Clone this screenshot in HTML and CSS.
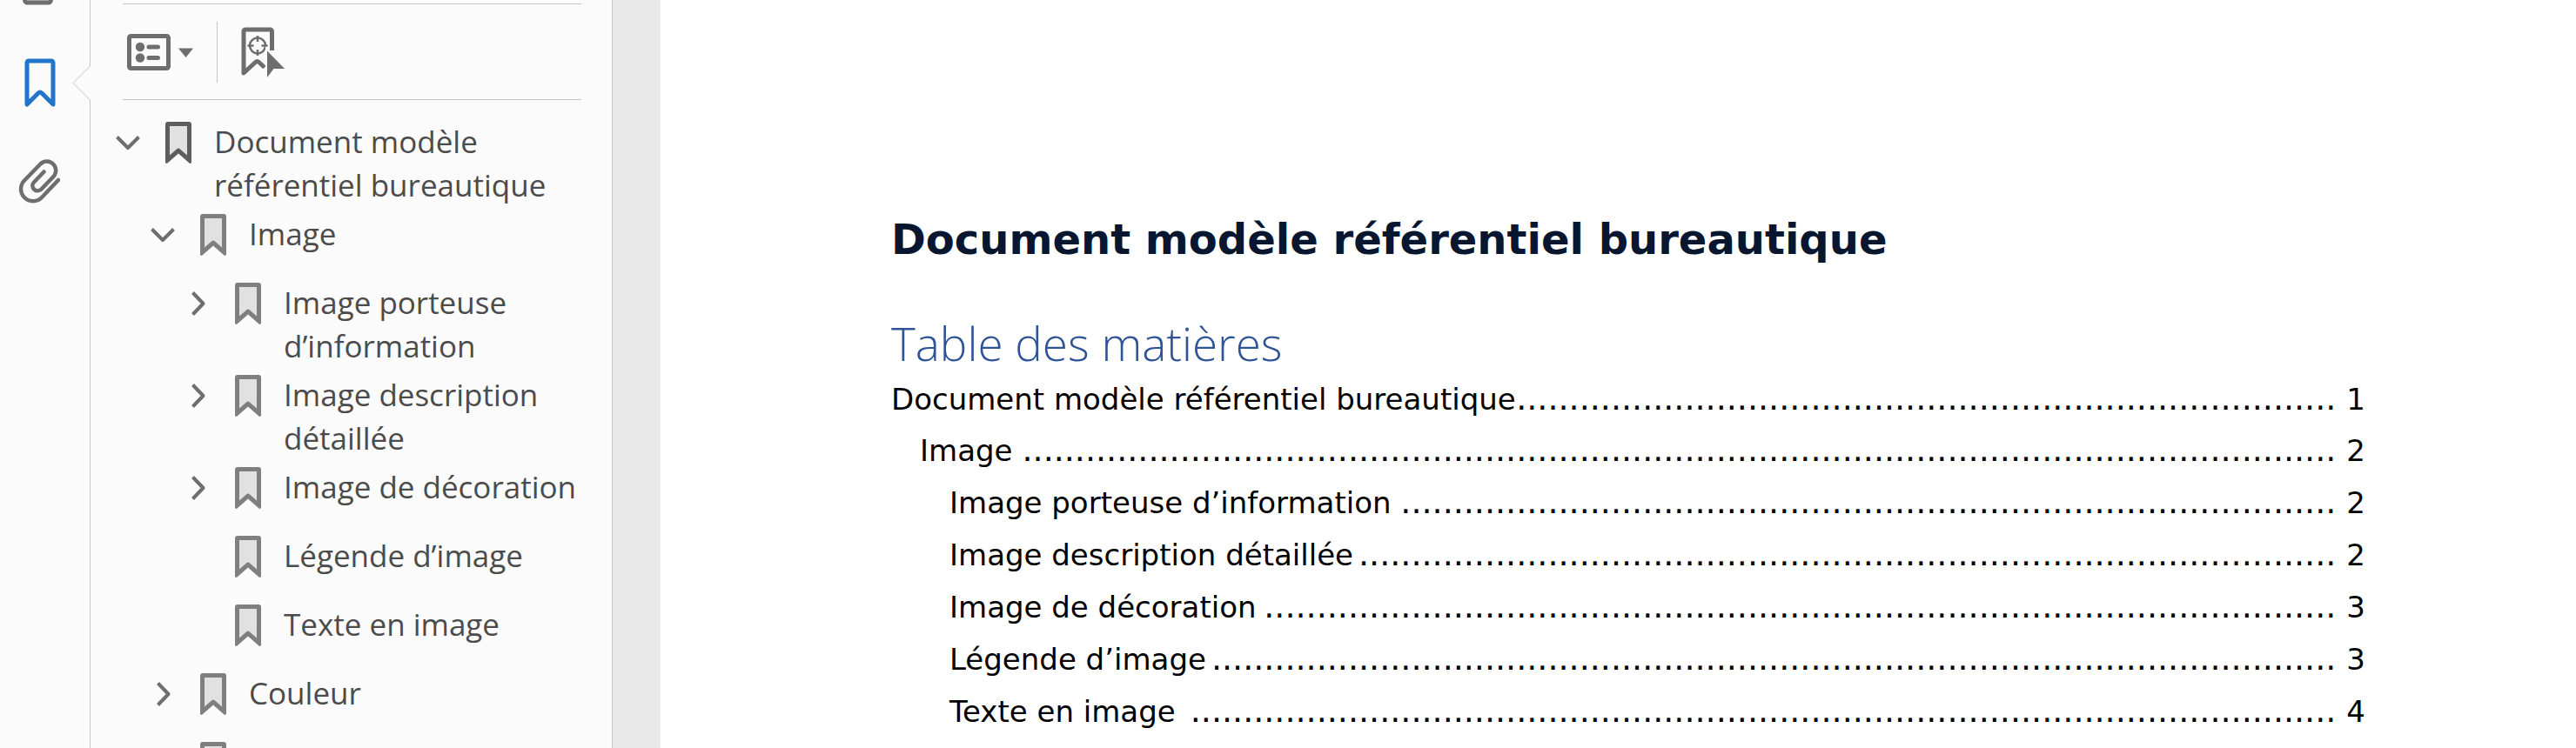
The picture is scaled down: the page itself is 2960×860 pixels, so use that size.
FILE: index.html
```html
<!DOCTYPE html>
<html lang="fr">
<head>
<meta charset="utf-8">
<title>Document modèle référentiel bureautique</title>
<link rel="stylesheet" href="styles.css">
</head>
<body>
<svg class="sprite" aria-hidden="true">
  <symbol id="mark" viewBox="0 0 30 48"><path d="M2 45.500V4a2 2 0 0 1 2-2H26a2 2 0 0 1 2 2V45.500L15 34Z" fill="#e1e1e1"/><path fill="currentColor" fill-rule="evenodd" d="M0 3a3 3 0 0 1 3-3H27a3 3 0 0 1 3 3V46.500a1.500 1.500 0 0 1-2.500 1L15 36.500 2.500 47.500A1.500 1.500 0 0 1 0 46.500ZM5 5V38.500L13 31.500a3 3 0 0 1 4 0L25 38.500V5Z"/></symbol>
  <symbol id="down" viewBox="0 0 28 28"><path d="M1.500 7.500 14 20 26.500 7.500" fill="none" stroke="currentColor" stroke-width="4" stroke-linejoin="round"/></symbol>
  <symbol id="right" viewBox="0 0 28 28"><path d="M8.500 1.500 20.500 14 8.500 26.500" fill="none" stroke="currentColor" stroke-width="4" stroke-linejoin="round"/></symbol>
</svg>
<div class="viewer">
  <nav class="rail" aria-label="Volets">
    <button class="rail-btn rail-pages"><svg width="36" height="48" viewBox="0 0 36 48"><rect x="2.500" y="2.500" width="30" height="42.500" rx="3" fill="#ddd" stroke="#6e6e6e" stroke-width="5"/></svg></button>
    <button class="rail-btn rail-active"><svg width="36" height="56" viewBox="0 0 36 56"><path d="M3 53V5a2 2 0 0 1 2-2H31a2 2 0 0 1 2 2V53L20 40a3 3 0 0 0-4 0Z" fill="none" stroke="#2174ca" stroke-width="5" stroke-linejoin="round"/></svg></button>
    <button class="rail-btn rail-clip"><svg width="48" height="52" viewBox="0 0 48 52"><path d="M29.500 15.500 18 27.500a5.800 5.800 0 0 0 8.500 8L39.500 22a10.500 10.500 0 0 0 1-15 10.500 10.500 0 0 0-15-.5L7 25.500a14 14 0 0 0 0 19.500 14 14 0 0 0 20 0L46 25" fill="none" stroke="#6e6e6e" stroke-width="4.500" stroke-linecap="round" stroke-linejoin="round"/></svg></button>
    <svg class="notch" width="21" height="39" viewBox="0 0 21 39"><path d="M20 0h1v39h-1z" fill="#fbfbfb"/><path d="M20.500 0 1 19.500 20.500 39" fill="#fbfbfb" stroke="#c6c6c6"/></svg>
  </nav>
  <aside class="panel">
    <div class="toolbar">
      <button class="tool"><svg width="76" height="42" viewBox="0 0 76 42"><rect x="2.500" y="2.500" width="45" height="37" rx="2" fill="none" stroke="#6e6e6e" stroke-width="5"/><circle cx="15" cy="15" r="5.200" fill="#6e6e6e"/><circle cx="15" cy="27.500" r="5.200" fill="#6e6e6e"/><path d="M25 15H35.500M25 27.500H35.500" stroke="#6e6e6e" stroke-width="5" stroke-linecap="round"/><path d="M59 16.500H76L67.500 27Z" fill="#6e6e6e"/></svg></button>
      <span class="divider"></span>
      <button class="tool"><svg width="50" height="58" viewBox="0 0 50 58"><path d="M35.500 27V5a2 2 0 0 0-2-2H5a2 2 0 0 0-2 2V53L16.500 40.500a3 3 0 0 1 4 0L27 46.500" fill="none" stroke="#6e6e6e" stroke-width="5" stroke-linejoin="round"/><circle cx="19" cy="21.500" r="9" fill="none" stroke="#6e6e6e" stroke-width="2.500"/><path d="M19 10V17M19 26V33M7.500 21.500H14.500M23.500 21.500H30.500" stroke="#6e6e6e" stroke-width="2.500"/><path d="M28 22V62L50 50Z" fill="#fbfbfb"/><path d="M30 27.500V58L37.500 48H50Z" fill="#6e6e6e"/></svg></button>
    </div>
    <ul class="tree">
      <li>
        <div class="row row-root"><button class="twist"><svg><use href="#down"/></svg></button><svg class="mark"><use href="#mark"/></svg><a href="#titre">Document modèle référentiel bureautique</a></div>
        <ul>
          <li>
            <div class="row"><button class="twist"><svg><use href="#down"/></svg></button><svg class="mark"><use href="#mark"/></svg><a href="#titre">Image</a></div>
            <ul>
              <li><div class="row"><button class="twist"><svg><use href="#right"/></svg></button><svg class="mark"><use href="#mark"/></svg><a href="#titre">Image porteuse d’information</a></div></li>
              <li><div class="row"><button class="twist"><svg><use href="#right"/></svg></button><svg class="mark"><use href="#mark"/></svg><a href="#titre">Image description détaillée</a></div></li>
              <li><div class="row"><button class="twist"><svg><use href="#right"/></svg></button><svg class="mark"><use href="#mark"/></svg><a href="#titre">Image de décoration</a></div></li>
              <li><div class="row"><span class="twist"></span><svg class="mark"><use href="#mark"/></svg><a href="#titre">Légende d’image</a></div></li>
              <li><div class="row"><span class="twist"></span><svg class="mark"><use href="#mark"/></svg><a href="#titre">Texte en image</a></div></li>
            </ul>
          </li>
          <li><div class="row"><button class="twist"><svg><use href="#right"/></svg></button><svg class="mark"><use href="#mark"/></svg><a href="#titre">Couleur</a></div></li>
          <li><div class="row"><span class="twist"></span><svg class="mark"><use href="#mark"/></svg></div></li>
        </ul>
      </li>
    </ul>
  </aside>
  <main class="page">
    <h1 id="titre">Document modèle référentiel bureautique</h1>
    <h2>Table des matières</h2>
    <ol class="toc">
      <li class="l1"><a href="#titre">Document modèle référentiel bureautique</a><span class="dots">..............................................................................</span><span>1</span></li>
      <li class="l2"><a href="#titre">Image</a><span class="dots">.............................................................................................................................</span><span>2</span></li>
      <li class="l3"><a href="#titre">Image porteuse d’information</a><span class="dots">.........................................................................................</span><span>2</span></li>
      <li class="l3"><a href="#titre">Image description détaillée</a><span class="dots">.............................................................................................</span><span>2</span></li>
      <li class="l3"><a href="#titre">Image de décoration</a><span class="dots">......................................................................................................</span><span>3</span></li>
      <li class="l3"><a href="#titre">Légende d’image</a><span class="dots">...........................................................................................................</span><span>3</span></li>
      <li class="l3"><a href="#titre">Texte en image</a><span class="dots">.............................................................................................................</span><span>4</span></li>
    </ol>
  </main>
</div>
</body>
</html>
```

FILE: styles.css
```css
* { box-sizing: border-box; }
body { margin: 0; background: #e9e9e9; }
ul, ol { list-style: none; margin: 0; padding: 0; }
a { color: inherit; text-decoration: none; }
button { padding: 0; border: 0; background: none; color: inherit; cursor: pointer; }
svg { display: block; }
.sprite { position: absolute; width: 0; height: 0; }

.viewer { display: flex; height: 100vh; overflow: hidden; }

.rail {
  position: relative;
  flex: none;
  width: 104px;
  padding-left: 21px;
  border-right: 1px solid #c6c6c6;
  background: #fbfbfb;
}
.rail-btn { display: block; }
.rail-pages { margin: -42px 0 0 5px; }
.rail-active { margin: 61px 0 0 7px; }
.rail-clip { margin-top: 59px; }
.notch { position: absolute; top: 76px; right: -1px; }

.panel {
  flex: none;
  width: 600px;
  padding: 4px 35px 0 28px;
  border-right: 1px solid #c6c6c6;
  background: #fbfbfb;
  color: #4b4b4b;
}
.toolbar {
  display: flex;
  align-items: center;
  gap: 27px;
  height: 111px;
  margin-left: 9px;
  padding-left: 5px;
  border: solid #c6c6c6;
  border-width: 1px 0;
}
.divider { width: 1px; height: 70px; background: #c6c6c6; }

.tree { padding-top: 20px; font: 35px/50px "Open Sans", "Noto Sans", sans-serif; }
.tree ul { padding-left: 40px; }
.row { display: flex; align-items: flex-start; min-height: 79px; padding: 3px 0; }
.row a { flex: 1; min-width: 0; }
.twist { flex: none; width: 30px; height: 52px; color: #6e6e6e; }
.twist svg { width: 28px; height: 28px; margin-left: 1px; }
.mark { flex: none; width: 30px; height: 48px; margin: 2px 26px 0 28px; color: #7f7f7f; }
.row-root .mark { color: #5e5e5e; }

.page {
  flex: 1;
  min-width: 0;
  margin-left: 55px;
  padding: 240px 242px 0 265px;
  background: #fff;
}
h1 { margin: 0; color: #08162f; font: bold 48px/70px "DejaVu Sans", sans-serif; }
h2 { margin: 50px 0 0; color: #2f5496; font: 300 53px/70px "Open Sans", sans-serif; }
.toc { color: #000; font: 34px/59px "DejaVu Sans", sans-serif; }
.toc li { display: flex; align-items: baseline; }
.toc a { white-space: nowrap; }
.l2 { padding-left: 33px; }
.l3 { padding-left: 67px; line-height: 60px; }
.dots { margin: 0 12px 0 auto; font-size: 38px; line-height: 1; white-space: nowrap; }
```
